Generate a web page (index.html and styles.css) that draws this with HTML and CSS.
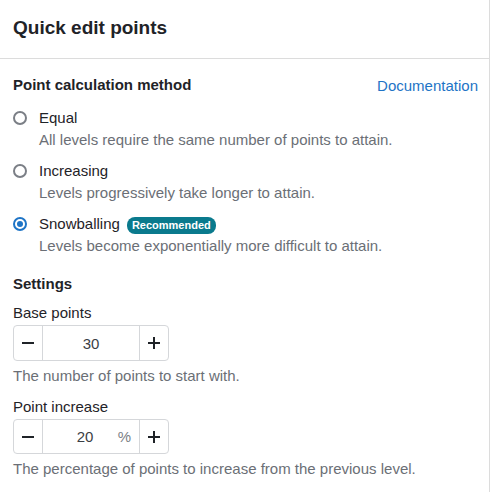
FILE: index.html
```html
<!DOCTYPE html>
<html>
<head>
<meta charset="utf-8">
<link rel="stylesheet" href="styles.css">
</head>
<body>
<div class="modal">
  <div class="header"><h1 class="title">Quick edit points</h1></div>
  <div class="body">
    <div class="section-head">
      <h2 class="section-title">Point calculation method</h2>
      <a class="doc-link" href="#">Documentation</a>
    </div>
    <div class="options">
      <label class="option">
        <span class="radio"></span>
        <span class="option-text">
          <span class="option-label">Equal</span>
          <span class="option-desc">All levels require the same number of points to attain.</span>
        </span>
      </label>
      <label class="option">
        <span class="radio"></span>
        <span class="option-text">
          <span class="option-label">Increasing</span>
          <span class="option-desc">Levels progressively take longer to attain.</span>
        </span>
      </label>
      <label class="option">
        <span class="radio checked"></span>
        <span class="option-text">
          <span class="option-label">Snowballing <span class="badge">Recommended</span></span>
          <span class="option-desc">Levels become exponentially more difficult to attain.</span>
        </span>
      </label>
    </div>
    <h2 class="section-title settings">Settings</h2>
    <div class="field">
      <div class="field-label">Base points</div>
      <div class="stepper">
        <span class="step-btn"><svg width="14" height="14" viewBox="0 0 14 14"><path d="M1 7h12" stroke="#1f2328" stroke-width="2"/></svg></span>
        <span class="step-value">30</span>
        <span class="step-btn"><svg width="14" height="14" viewBox="0 0 14 14"><path d="M1 7h12M7 1v12" stroke="#1f2328" stroke-width="2"/></svg></span>
      </div>
      <div class="help">The number of points to start with.</div>
    </div>
    <div class="field">
      <div class="field-label">Point increase</div>
      <div class="stepper">
        <span class="step-btn"><svg width="14" height="14" viewBox="0 0 14 14"><path d="M1 7h12" stroke="#1f2328" stroke-width="2"/></svg></span>
        <span class="step-value with-suffix">20<span class="suffix">%</span></span>
        <span class="step-btn"><svg width="14" height="14" viewBox="0 0 14 14"><path d="M1 7h12M7 1v12" stroke="#1f2328" stroke-width="2"/></svg></span>
      </div>
      <div class="help">The percentage of points to increase from the previous level.</div>
    </div>
  </div>
</div>
</body>
</html>
```
FILE: styles.css
```css
* { box-sizing: border-box; }
html, body { margin: 0; padding: 0; background: #fff; }
body {
  font-family: "Liberation Sans", Arial, sans-serif;
  color: #1f2328;
  font-size: 15px;
}
.modal {
  width: 490px;
  height: 492px;
  border-right: 1px solid #dcdcdc;
  overflow: hidden;
}
.header {
  height: 59px;
  border-bottom: 1px solid #dcdcdc;
  padding: 16px 13px 0;
}
.title {
  margin: 0;
  font-size: 19px;
  line-height: 24px;
  font-weight: 700;
}
.body {
  padding: 15px 11px 0 13px;
}
.section-head {
  display: flex;
  justify-content: space-between;
  align-items: center;
  height: 22px;
}
.section-title {
  margin: 0;
  font-size: 15px;
  line-height: 22px;
  font-weight: 700;
}
.doc-link {
  color: #1e74c6;
  text-decoration: none;
  font-size: 15px;
}
.options {
  display: flex;
  flex-direction: column;
  gap: 9px;
  margin-top: 11px;
}
.option {
  display: flex;
  gap: 12px;
}
.radio {
  width: 14px;
  height: 14px;
  border: 2px solid #7b7f86;
  border-radius: 50%;
  margin-top: 4px;
  flex: none;
  position: relative;
}
.radio.checked {
  border-color: #1e74c6;
}
.radio.checked::after {
  content: "";
  position: absolute;
  left: 2px;
  top: 2px;
  width: 6px;
  height: 6px;
  border-radius: 50%;
  background: #1e74c6;
}
.option-text {
  display: flex;
  flex-direction: column;
}
.option-label {
  line-height: 22px;
  display: flex;
  align-items: center;
  gap: 7px;
}
.option-desc {
  line-height: 22px;
  color: #6b6f76;
}
.badge {
  background: #0a7a8d;
  color: #fff;
  font-size: 11px;
  font-weight: 700;
  line-height: 17px;
  padding: 0 5px;
  border-radius: 8px;
  margin-top: 2px;
}
.settings {
  margin-top: 16px;
}
.field {
  margin-top: 7px;
}
.field + .field {
  margin-top: 9px;
}
.field-label {
  line-height: 22px;
}
.stepper {
  display: flex;
  width: 156px;
  height: 36px;
  border: 1px solid #d5d7da;
  border-radius: 4px;
  margin-top: 1px;
}
.field + .field .stepper {
  height: 35px;
}
.step-btn {
  width: 29px;
  display: flex;
  align-items: center;
  justify-content: center;
  flex: none;
}
.step-btn:first-child { border-right: 1px solid #d5d7da; }
.step-btn:last-child { border-left: 1px solid #d5d7da; }
.step-value {
  flex: 1;
  display: flex;
  align-items: center;
  justify-content: center;
  font-size: 15px;
  color: #3a3e44;
  position: relative;
}
.step-value.with-suffix {
  padding-right: 12px;
}
.suffix {
  position: absolute;
  right: 8px;
  color: #7b7f86;
}
.help {
  line-height: 22px;
  color: #6b6f76;
  margin-top: 4px;
}
```
